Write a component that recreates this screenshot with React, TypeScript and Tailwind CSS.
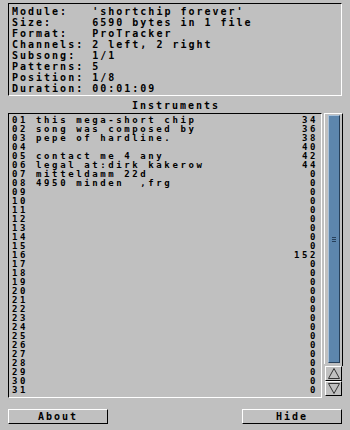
import React from 'react';

/* 모듈 정보 — 라벨은 10칸 고정폭으로 맞춘다 */
const info: [string, string][] = [
    ['Module:', "'shortchip forever'"],
    ['Size:', '6590 bytes in 1 file'],
    ['Format:', 'ProTracker'],
    ['Channels:', '2 left, 2 right'],
    ['Subsong:', '1/1'],
    ['Patterns:', '5'],
    ['Position:', '1/8'],
    ['Duration:', '00:01:09'],
];

const names: Record<number, string> = {
    1: 'this mega-short chip',
    2: 'song was composed by',
    3: 'pepe of hardline.',
    5: 'contact me 4 any',
    6: 'legal at:dirk kakerow',
    7: 'mitteldamm 22d',
    8: '4950 minden  ,frg',
};

const sizes: Record<number, number> = { 1: 34, 2: 36, 3: 38, 4: 40, 5: 42, 6: 44, 16: 152 };

const instruments = Array.from({ length: 31 }, (_, i) => ({
    no: String(i + 1).padStart(2, '0'),
    name: names[i + 1] ?? '',
    size: sizes[i + 1] ?? 0,
}));

function Button({ label }: { label: string }) {
    return (
        <div className="w-[100px] h-[15px] border-t border-l border-white border-r border-b border-r-black border-b-black flex items-center justify-center leading-[11px]">
            {label}
        </div>
    );
}

function Arrow({ up }: { up?: boolean }) {
    return (
        <div className="h-[15px] w-[17px] ml-[1px] border-t border-l border-white border-r border-b border-r-black border-b-black flex items-center justify-center">
            <svg width="12" height="11" viewBox="0 0 12 11">
                {up ? (
                    <path d="M6 0.5 L11.5 10.5 L0.5 10.5 Z" fill="none" stroke="#333" strokeWidth="1" />
                ) : (
                    <path d="M0.5 0.5 L11.5 0.5 L6 10.5 Z" fill="none" stroke="#333" strokeWidth="1" />
                )}
            </svg>
        </div>
    );
}

export default function App() {
    return (
        <div className="w-[350px] h-[430px] bg-[#c0c0c0] text-black font-bold text-[10px] tracking-[2px] font-['DejaVu_Sans_Mono','Liberation_Mono',monospace] flex flex-col pt-[3px]">
            {/* 정보 박스 */}
            <div className="ml-[8px] w-[334px] h-[93px] border-t border-l border-black border-r border-b border-r-white border-b-white pl-[3px] pt-[2px]">
                {info.map(([k, v]) => (
                    <div key={k} className="h-[11px] leading-[11px] whitespace-pre">
                        {k.padEnd(10, ' ')}{v}
                    </div>
                ))}
            </div>

            {/* 섹션 타이틀 */}
            <div className="h-[17px] pt-[4px] leading-[11px] text-center pl-[2px]">Instruments</div>

            {/* 악기 목록 + 스크롤바 */}
            <div className="flex ml-[8px]">
                <div className="w-[314px] h-[285px] border-t border-l border-black border-r border-b border-r-white border-b-white pl-[3px] pr-[3px] pt-[2px] text-[9px] tracking-[2.6px]">
                    {instruments.map(r => (
                        <div key={r.no} className="h-[9px] leading-[9px] flex whitespace-pre">
                            <span className="flex-1">{r.no} {r.name}</span>
                            <span>{r.size}</span>
                        </div>
                    ))}
                </div>
                <div className="ml-[2px] w-[19px] flex flex-col">
                    <div className="h-[251px] border-t border-l border-white border-r border-r-black pt-[1px] pl-[3px] pr-[2px]">
                        <div className="h-[248px] w-[12px] bg-[#5d86ad] border-l border-t border-[#a9c1d9] border-r border-b border-r-[#27405a] border-b-[#27405a] flex flex-col items-center justify-center gap-[1px]">
                            <div className="w-[4px] h-[1px] bg-[#27405a]" />
                            <div className="w-[4px] h-[1px] bg-[#27405a]" />
                            <div className="w-[4px] h-[1px] bg-[#27405a]" />
                        </div>
                    </div>
                    <div className="h-[2px] border-r border-r-black" />
                    <Arrow up />
                    <Arrow />
                </div>
            </div>

            {/* 하단 버튼 */}
            <div className="flex justify-between ml-[8px] mr-[8px] mt-[11px]">
                <Button label="About" />
                <Button label="Hide" />
            </div>
        </div>
    );
}
